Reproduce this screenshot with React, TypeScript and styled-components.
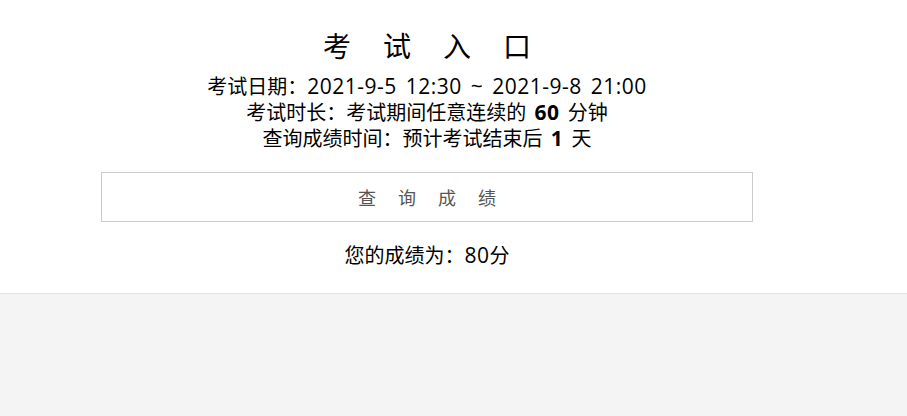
import React from 'react';
import styled, { createGlobalStyle } from 'styled-components';

const GlobalStyle = createGlobalStyle`
    html, body {
        margin: 0;
        padding: 0;
        background: #f4f4f4;
        font-family: "Open Sans", "Noto Sans CJK SC", sans-serif;
        color: #000;
    }
`;

const StyledPanel = styled.section`
        background: #fff;
        border-bottom: 1px solid #e3e3e3;
        height: 294px;
        box-sizing: border-box;
    `;

const StyledInner = styled.div`
        width: 854px;
        display: flex;
        flex-direction: column;
        align-items: center;
        padding-top: 24px;
    `;

const StyledTitle = styled.h1`
        margin: 0 -32px 8px 0;
        font-family: "Noto Sans CJK SC", sans-serif;
        font-size: 28px;
        font-weight: 400;
        line-height: 42px;
        letter-spacing: 32px;
    `;

const StyledInfo = styled.p`
        margin: 0;
        font-size: 20px;
        line-height: 26px;
        text-align: center;
        white-space: nowrap;
    `;

// latin runs look a touch larger and looser than the CJK text
const StyledNum = styled.span<{ $bold?: boolean }>`
        font-size: 21px;
        line-height: 1;
        font-weight: ${(p) => (p.$bold ? 700 : 400)};
        letter-spacing: 0.5px;
        word-spacing: 3px;
        padding: 0 ${(p) => (p.$bold ? '3px' : '0')};
    `;

const StyledButton = styled.button`
        margin-top: 20px;
        width: 652px;
        height: 50px;
        background: #fff;
        border: 1px solid #ccc;
        font-family: "Noto Sans CJK SC", sans-serif;
        font-size: 18px;
        color: #555;
        letter-spacing: 22px;
        text-indent: 22px;
        cursor: pointer;
    `;

const StyledScore = styled.p`
        margin: 21px 0 0 0;
        font-size: 20px;
        line-height: 26px;
    `;

export default function App() {
    return (
        <>
            <GlobalStyle />
            <StyledPanel>
                <StyledInner>
                    <StyledTitle>考试入口</StyledTitle>
                    <StyledInfo>考试日期：<StyledNum>2021-9-5 12:30 ~ 2021-9-8 21:00</StyledNum></StyledInfo>
                    <StyledInfo>考试时长：考试期间任意连续的 <StyledNum $bold>60</StyledNum> 分钟</StyledInfo>
                    <StyledInfo>查询成绩时间：预计考试结束后 <StyledNum $bold>1</StyledNum> 天</StyledInfo>
                    <StyledButton>查询成绩</StyledButton>
                    <StyledScore>您的成绩为：<StyledNum>80</StyledNum>分</StyledScore>
                </StyledInner>
            </StyledPanel>
        </>
    );
}
